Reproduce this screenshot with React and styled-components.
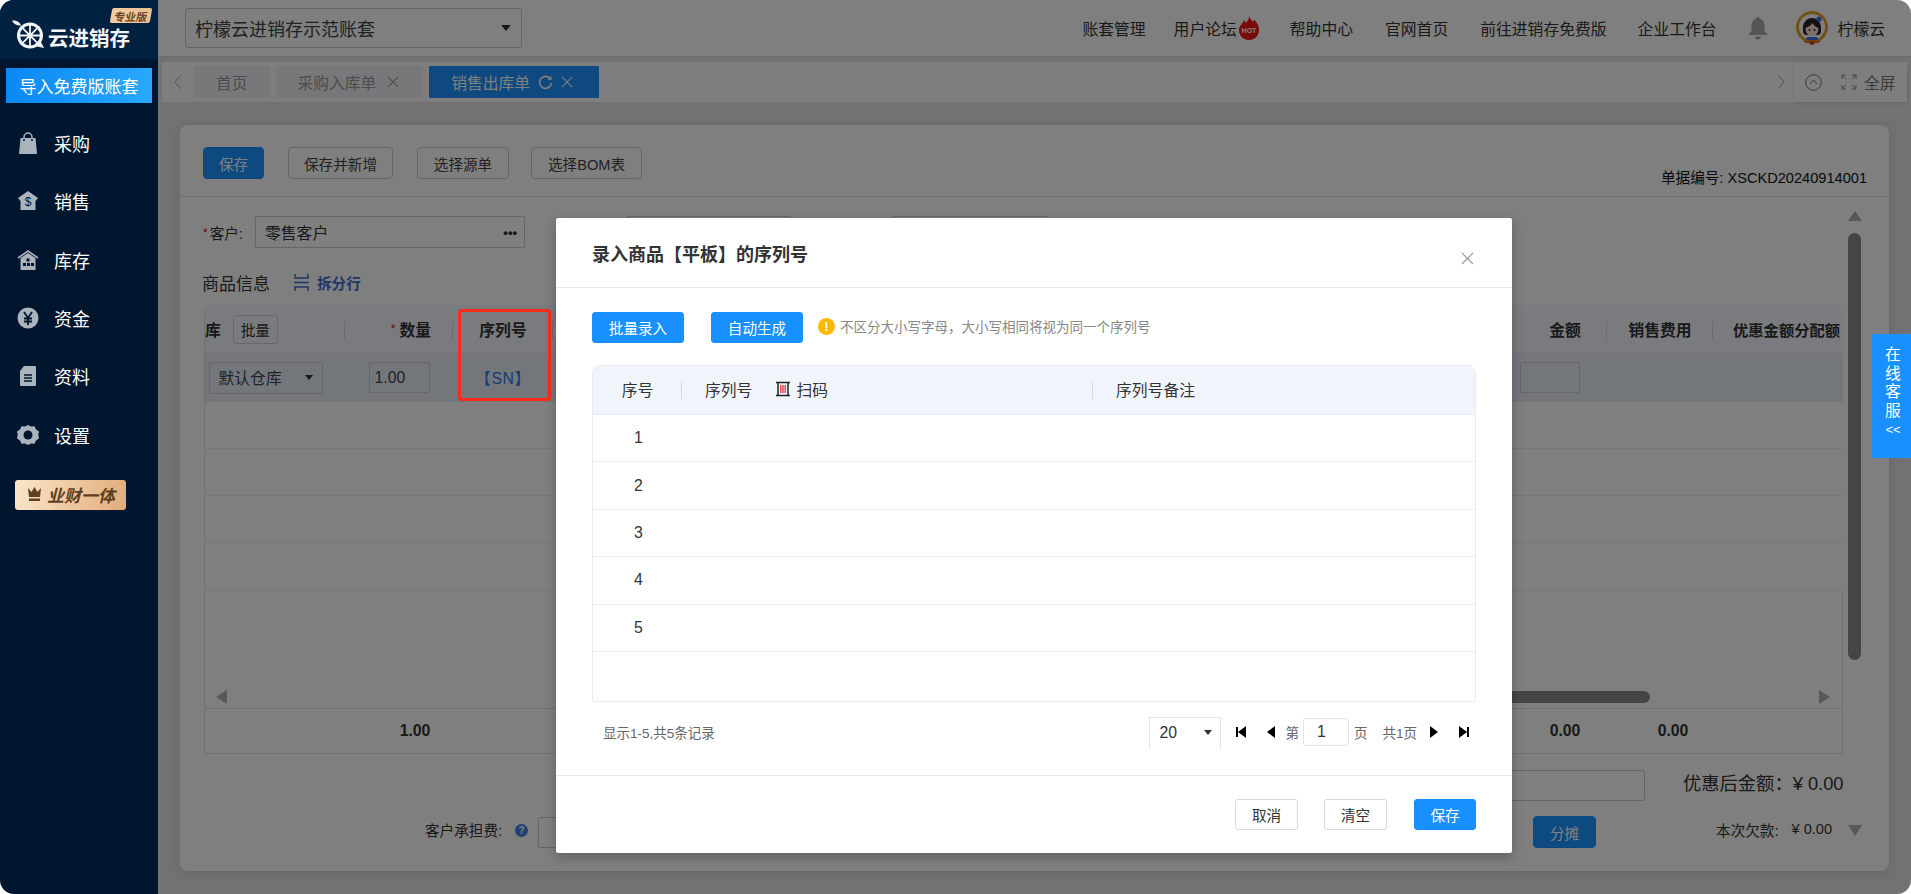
import React from "react";
import styled, { createGlobalStyle } from "styled-components";

const FONT = `"Liberation Sans", "Noto Sans CJK SC", sans-serif`;

const Global = createGlobalStyle`
  html, body { margin: 0; padding: 0; background: #fff; overflow: hidden; }
  body { font-family: ${FONT}; font-size: 14.6px; color: #333; }
  * { box-sizing: border-box; }
`;

const Shell = styled.div`
  position: relative; display: flex; width: 1911px; height: 894px;
  border-radius: 14px; overflow: hidden;
`;

/* ---------- sidebar ---------- */
const Sidebar = styled.aside`
  flex: 0 0 158px; display: flex; flex-direction: column; background: #00162e; color: #fff;
`;
const LogoBar = styled.div`
  position: relative; height: 59px; flex: none; background: #00213f;
  display: flex; align-items: flex-start; padding: 20px 0 0 12px; gap: 3px;
`;
const LogoText = styled.span`
  font-size: 20.5px; font-weight: 700; line-height: 24px; margin-top: 7px; color: #f2f4f7; white-space: nowrap;
`;
const EditionBadge = styled.span`
  position: absolute; left: 111px; top: 8px; width: 40px; height: 15px; border-radius: 2px;
  display: flex; align-items: center; justify-content: center; transform: skewX(-10deg);
  background: linear-gradient(90deg, #f4cda2, #ecc08f); color: #6a4524;
  font-size: 11px; font-weight: 700; white-space: nowrap;
`;
const ImportButton = styled.div`
  margin: 9px 6px 0; height: 35px; flex: none; display: flex; align-items: center; justify-content: center;
  background: linear-gradient(90deg, #0b88f3, #2aa8fd); font-size: 17px; color: #fff;
`;
const Nav = styled.nav`
  margin-top: 11px; display: flex; flex-direction: column;
`;
const NavItem = styled.div`
  height: 58.3px; display: flex; align-items: center; padding-left: 17px; gap: 15px; font-size: 18px; color: #fff;
  svg { flex: none; width: 22px; height: 22px; color: #abb3bd; }
`;
const GoldButton = styled.div`
  margin: 16px 0 0 15px; width: 111px; height: 30px; border-radius: 3px; display: flex; align-items: center;
  padding-left: 12px; gap: 5px; background: linear-gradient(100deg, #fbe5cb, #e2ac79);
  color: #5f3f1d; font-size: 17px; font-weight: 700; font-style: italic; white-space: nowrap;
`;

/* ---------- main ---------- */
const Main = styled.main`
  position: relative; flex: 1; min-width: 0; display: flex; flex-direction: column; background: #e5e5e5;
`;
const Header = styled.header`
  height: 56px; flex: none; display: flex; align-items: center; background: #fff;
  padding: 0 26px 0 27px; box-shadow: 0 1px 3px rgba(0,0,0,.08);
`;
const AccountSelect = styled.div`
  width: 337px; height: 40px; border: 1px solid #ccc; border-radius: 3px; display: flex; align-items: center;
  justify-content: space-between; padding: 0 10px 0 9px; font-size: 18px; color: #444;
`;
const Caret = styled.i`
  display: block; width: 0; height: 0; flex: none;
  border-left: ${p => p.$s || 5}px solid transparent; border-right: ${p => p.$s || 5}px solid transparent;
  border-top: ${p => (p.$s || 5) + 1}px solid ${p => p.$c || "#333"};
`;
const TopNav = styled.div`
  margin-left: auto; display: flex; align-items: center; font-size: 15.8px; color: #333;
`;
const TopLink = styled.span`
  display: flex; align-items: center; gap: ${p => p.$gap ?? 4}px; margin-left: ${p => p.$ml ?? 31}px; white-space: nowrap;
`;
const UserName = styled.span`margin-left: 10px; white-space: nowrap;`;

const TabBar = styled.div`
  height: 40px; flex: none; margin: 6px 4px 0; display: flex; background: #fcfcfc;
`;
const TabArrow = styled.div`
  width: ${p => p.$w}px; flex: none; display: flex; align-items: center; justify-content: center; color: #aaa;
  padding-right: ${p => p.$pr || 0}px;
`;
const Tabs = styled.div`
  flex: 1; display: flex; gap: 6px; padding-top: 4px;
`;
const Tab = styled.div`
  height: 32px; display: flex; align-items: center; padding: 0 ${p => p.$pr ?? 22}px 0 22px; gap: ${p => p.$gap || 0}px;
  background: ${p => p.$active ? "#1c92ff" : "#f0f1f7"}; color: ${p => p.$active ? "#fff" : "#999"};
  font-size: 15.75px; white-space: nowrap; border-radius: 1px;
`;
const TabTools = styled.div`
  width: 113px; flex: none; display: flex; align-items: center; padding-left: 11px; gap: 7px; font-size: 15.8px; color: #777;
  box-shadow: 0 1px 4px rgba(0,0,0,.12);
  svg:first-child { margin-right: 12px; }
`;

const Card = styled.section`
  flex: 1; min-height: 0; margin: 23px 22px 23px 22px; background: #fff; border-radius: 8px; display: flex; flex-direction: column;
  box-shadow: 0 2px 14px rgba(0,0,0,.12);
`;
const CardTop = styled.div`
  height: 72px; flex: none; border-bottom: 1px solid #e4e4e4; display: flex; align-items: flex-start;
  padding: 22px 23px 0 23px; gap: 24px;
`;
const Btn = styled.button`
  height: 32px; width: ${p => p.$w}px; flex: none; padding: 0; border-radius: 4px; font: inherit; font-size: 14.6px; cursor: pointer;
  margin-left: ${p => p.$ml || 0}px;
  border: 1px solid ${p => p.$primary ? "#1890ff" : "#ccc"};
  background: ${p => p.$primary ? "#1a94ff" : "#fff"}; color: ${p => p.$primary ? "#fff" : "#444"};
`;
const DocNo = styled.span`
  margin-left: auto; margin-top: 19px; margin-right: -1px; font-size: 14.6px; color: #111; white-space: nowrap;
`;
const CardBody = styled.div`
  flex: 1; min-height: 0; display: flex; padding: 0 28px 35px 23px; gap: 5px;
`;
const Content = styled.div`
  width: 1640px; flex: none; display: flex; flex-direction: column;
`;
const VScroll = styled.div`
  width: 13px; flex: none; display: flex; flex-direction: column; align-items: center; padding-top: 14px; justify-content: flex-start;
`;
const VThumb = styled.div`
  width: 13px; height: 427px; margin-top: 12px; border-radius: 7px; background: #8a8a8a;
`;
const TriUp = styled.i`
  width: 0; height: 0; border-left: 7px solid transparent; border-right: 7px solid transparent; border-bottom: 10px solid #b0b0b0;
`;
const TriDown = styled.i`
  width: 0; height: 0; margin-top: auto; border-left: 7px solid transparent; border-right: 7px solid transparent; border-top: 11px solid #b0b0b0;
`;

const FormRow = styled.div`
  height: 32px; margin-top: 19px; flex: none; display: flex; align-items: center; font-size: 15.8px; color: #333;
`;
const FieldLabel = styled.span`
  width: 52px; flex: none; white-space: nowrap; font-size: 14.6px;
  b { color: #e00; font-weight: 400; font-size: 12px; margin-right: 2px; vertical-align: 2px; }
`;
const FieldBox = styled.div`
  width: ${p => p.$w}px; margin-left: ${p => p.$ml || 0}px; height: 32px; flex: none; border: 1px solid #ccc; border-radius: 2px;
  display: flex; align-items: center; justify-content: space-between; padding: 0 7px 0 9px; font-size: 15.8px;
`;
const Dots = styled.span`font-weight: 700; font-size: 13px; letter-spacing: 0; line-height: 1;`;
const SectionHead = styled.div`
  height: 24px; margin: 22px 0 0 -1px; flex: none; display: flex; align-items: center; font-size: 17px; color: #333;
`;
const SplitLink = styled.span`
  display: flex; align-items: center; gap: 8px; margin-left: 24px; font-size: 14.6px; font-weight: 700; color: #3f6fd0;
`;
const Table = styled.div`
  margin-top: 11px; margin-left: 1px; width: 1639px; flex: none; display: flex; flex-direction: column; overflow: hidden;
  border-radius: 8px 8px 0 0; border-left: 1px solid #e2e2e2;
`;
const cols = "140px 108px 100px 970px 84px 106px 131px";
const HeadRow = styled.div`
  height: 49px; display: grid; grid-template-columns: ${cols}; background: #f3f7fd; border-bottom: 1px solid #e8ebf1;
`;
const HeadCell = styled.div`
  position: relative; display: flex; align-items: center; justify-content: ${p => p.$left ? "flex-start" : "center"};
  font-size: ${p => p.$fs || 15.8}px; font-weight: 700; color: #333; white-space: nowrap; overflow: hidden;
  padding-left: ${p => p.$pl || 0}px;
  ${p => p.$sep ? `&::after { content: ""; position: absolute; right: 0; top: 16px; height: 18px; width: 1px; background: #d6d9df; }` : ""}
  b { color: #e00; font-size: 12px; margin-right: 4px; font-weight: 400; }
`;
const SmallBtn = styled.span`
  margin-left: 12px; width: 45px; height: 29px; border: 1px solid #d0d3d8; border-radius: 3px; display: flex; align-items: center; justify-content: center;
  font-weight: 400; font-size: 14.6px; color: #333;
`;
const DataRow = styled.div`
  height: 47.5px; display: grid; grid-template-columns: ${cols}; background: #e6eff9; align-items: center;
`;
const RowCell = styled.div`
  display: flex; align-items: center; justify-content: center; font-size: 15.8px; color: #444;
`;
const RowSelect = styled.div`
  width: 114px; height: 32px; margin-left: -19px; border: 1px solid #ccc; border-radius: 2px; display: flex; align-items: center; justify-content: space-between; padding: 0 9px; background: transparent; font-size: 15.8px;
`;
const RowInput = styled.div`
  width: ${p => p.$w}px; height: 31px; margin-left: ${p => p.$ml || 0}px; border: 1px solid #ccc; border-radius: 2px; display: flex; align-items: center; padding-left: 5px; background: ${p => p.$plain ? "transparent" : "#fff"}; font-size: 15.8px;
`;
const SnLink = styled.span`color: #2a7de1; font-size: 15.8px; letter-spacing: .6px;`;
const EmptyRow = styled.div`
  height: 47.3px; border-bottom: 1px solid #ececec;
`;
const ScrollZone = styled.div`
  height: 117px; display: flex; align-items: flex-end; padding: 0 12px 4px 11px; border-right: 1px solid #e2e2e2; position: relative;
`;
const TriLeft = styled.i`
  width: 0; height: 0; border-top: 7px solid transparent; border-bottom: 7px solid transparent; border-right: 11px solid #b0b0b0;
`;
const TriRight = styled.i`
  margin-left: auto; width: 0; height: 0; border-top: 7px solid transparent; border-bottom: 7px solid transparent; border-left: 11px solid #b0b0b0;
`;
const HThumb = styled.div`
  margin-left: 373px; width: 1050px; height: 12px; margin-bottom: 1px; border-radius: 6px; background: #8a8a8a;
`;
const TotalRow = styled.div`
  height: 46px; display: grid; grid-template-columns: ${cols}; align-items: center; border-top: 1px solid #e2e2e2; border-bottom: 1px solid #e2e2e2; border-right: 1px solid #e2e2e2;
  font-size: 15.8px; font-weight: 700; color: #333;
`;
const TotalCell = styled.span`text-align: center; padding-left: ${p => p.$pl || 0}px;`;
const SumRow = styled.div`
  margin-top: ${p => p.$mt}px; height: 31px; flex: none; display: flex; align-items: center; color: #333;
`;
const SumInput = styled.div`
  width: ${p => p.$w}px; height: 31px; flex: none; margin-left: ${p => p.$ml || 0}px; border: 1px solid #ccc; border-radius: 2px;
`;
const SumBig = styled.span`font-size: 18.3px; white-space: nowrap; margin: 0 0 6px ${p => p.$ml}px;`;
const SumSmall = styled.span`font-size: 14.6px; white-space: nowrap; margin: 0 0 6px ${p => p.$ml || 0}px;`;
const HelpDot = styled.span`
  width: 13px; height: 13px; margin: 0 0 3px 13px; flex: none; border-radius: 50%; background: #3f83e8; color: #fff; font-size: 10px; font-weight: 700; display: flex; align-items: center; justify-content: center;
`;

/* ---------- overlay / modal ---------- */
const Mask = styled.div`
  position: absolute; inset: 0; z-index: 5; background: rgba(0,0,0,.5);
`;
const RedMark = styled.div`
  position: absolute; z-index: 6; left: 300px; top: 309px; width: 93px; height: 92px; border: 3px solid #ff2a1a; border-radius: 4px;
`;
const Modal = styled.div`
  position: absolute; z-index: 7; left: 398px; top: 218px; width: 956px; height: 635px; background: #fff; border-radius: 2px;
  display: flex; flex-direction: column; box-shadow: 0 4px 12px rgba(0,0,0,.25);
`;
const ModalHead = styled.div`
  height: 70px; flex: none; display: flex; align-items: center; justify-content: space-between; padding: 0 38px 0 36px; border-bottom: 1px solid #e8e8e8;
  font-size: 18px; font-weight: 700; color: #333;
`;
const CloseX = styled.span`display: flex; color: #999; margin-top: 12px;`;
const ModalBody = styled.div`
  flex: 1; padding: 23px 36px 0; display: flex; flex-direction: column;
`;
const ModalTools = styled.div`
  height: 32px; flex: none; display: flex; align-items: center;
`;
const ActionBtn = styled.button`
  width: ${p => p.$w}px; height: 31px; flex: none; margin-left: ${p => p.$ml || 0}px; padding: 0; border-radius: 3px; font: inherit; font-size: 14.6px; cursor: pointer;
  border: 1px solid ${p => p.$primary ? "#1890ff" : "#d9d9d9"}; background: ${p => p.$primary ? "#1890ff" : "#fff"}; color: ${p => p.$primary ? "#fff" : "#333"};
`;
const Warn = styled.span`
  margin: 0 0 2px 15px; width: 17px; height: 17px; flex: none; border-radius: 50%; background: #ffb800; color: #fff; font-size: 13px; font-weight: 700; display: flex; align-items: center; justify-content: center;
`;
const WarnText = styled.span`
  margin: 0 0 2px 5px; font-size: 13.5px; color: #888; white-space: nowrap;
`;
const SnTable = styled.div`
  margin-top: 22px; height: 337px; flex: none; border: 1px solid #e8eaf0; border-radius: 8px 8px 0 0; overflow: hidden; display: flex; flex-direction: column;
`;
const snCols = "89px 411px 1fr";
const SnHead = styled.div`
  height: 49px; flex: none; display: grid; grid-template-columns: ${snCols}; background: #f0f4fb; border-bottom: 1px solid #e8ebf1; font-size: 15.8px; color: #333; padding-bottom: 2px;
`;
const SnHeadCell = styled.div`
  position: relative; display: flex; align-items: center; justify-content: ${p => p.$center ? "center" : "flex-start"};
  padding-left: ${p => p.$center ? 0 : 23}px; gap: 4px;
  ${p => p.$sep ? `&::after { content: ""; position: absolute; right: 0; top: 15px; height: 18px; width: 1px; background: #d6d9df; }` : ""}
`;
const ScanLabel = styled.span`
  display: flex; align-items: center; gap: 5px; margin-left: 19px;
`;
const SnRow = styled.div`
  height: 47.4px; flex: none; display: grid; grid-template-columns: ${snCols}; align-items: center; border-bottom: 1px solid #eceef4; font-size: 15.8px; color: #333;
`;
const SnIndex = styled.span`text-align: center; margin-left: 2px;`;
const Pager = styled.div`
  margin-top: 14px; height: 32px; flex: none; display: flex; align-items: center; padding: 0 6px 0 11px; color: #666; font-size: 13.5px;
`;
const PageSize = styled.div`
  margin-left: auto; width: 72px; height: 31px; border: 1px solid #e2e2e8; border-bottom: none; display: flex; align-items: center; justify-content: space-between;
  padding: 0 8px 0 9px; font-size: 15.8px; color: #333;
`;
const PageIcon = styled.svg`
  width: 12px; height: 12px; flex: none; margin-left: ${p => p.$ml}px; color: #000;
`;
const PageText = styled.span`
  margin-left: ${p => p.$ml}px; font-size: 13.5px; color: #666; white-space: nowrap;
`;
const PageInput = styled.div`
  margin-left: 4px; width: 46px; height: 28px; border: 1px solid #e2e2e8; border-radius: 3px; display: flex; align-items: center; padding-left: 13px; font-size: 15.8px; color: #333;
`;
const ModalFoot = styled.div`
  height: 78px; flex: none; border-top: 1px solid #e8e8e8; display: flex; align-items: flex-start; justify-content: flex-end; padding: 23px 36px 0;
`;
const OnlineTab = styled.div`
  position: absolute; z-index: 8; right: 0; top: 334px; width: 39px; height: 124px; background: #1a90ff; color: #fff; font-size: 15.8px; line-height: 18.7px;
  display: flex; flex-direction: column; align-items: center; padding: 12px 0 0 3px;
  small { font-size: 13px; line-height: 17px; }
`;

/* ---------- drawings ---------- */
const LemonLogo = () => (
  <svg width="33" height="29" viewBox="0 0 33 29" style={{ flex: "none" }}>
    <path d="M0 .5c4-.5 8 1.500 9 5-3.500.5-7.500-1-9-5z" fill="#f2f4f7" />
    <circle cx="18" cy="15.500" r="13" fill="#f2f4f7" />
    <path d="M29 22l3 6-7-1.500z" fill="#f2f4f7" />
    <circle cx="18" cy="15.500" r="10" fill="#00213f" />
    <g stroke="#f2f4f7" strokeWidth="1.800">
      <path d="M18 5v21M7.500 15.500h21M10.600 8.100l14.800 14.800M25.400 8.100 10.600 22.900" />
    </g>
    <circle cx="18" cy="15.500" r="2" fill="#f2f4f7" />
  </svg>
);
const Ico = {
  bag: <svg viewBox="0 0 22 22"><path d="M7 8V5a4 4 0 0 1 8 0v3" fill="none" stroke="currentColor" strokeWidth="1.500" /><path d="M3.500 6h15L20 22H2z" fill="currentColor" /><circle cx="7" cy="8" r="1" fill="#00162e" /><circle cx="15" cy="8" r="1" fill="#00162e" /></svg>,
  tag: <svg viewBox="0 0 22 22"><path d="M11 1l10 7-2.500 3v9h-15v-9L1 8z" fill="currentColor" /><text x="11" y="16" fontSize="12" textAnchor="middle" fill="#00162e" fontFamily="Liberation Sans">$</text></svg>,
  house: <svg viewBox="0 0 22 22"><path d="M1 9l10-7 10 7" fill="none" stroke="currentColor" strokeWidth="1.600" /><path d="M3.500 9L11 4l7.500 5v12h-15z" fill="currentColor" /><g fill="#00162e"><rect x="9.500" y="9.500" width="3" height="3" /><rect x="6" y="14" width="3" height="3" /><rect x="10" y="14" width="3" height="3" /><rect x="14" y="14" width="3" height="3" /></g></svg>,
  yen: <svg viewBox="0 0 22 22"><circle cx="11" cy="11" r="10.500" fill="currentColor" /><path d="M7 5l4 6 4-6M7 11.500h8M7 14.500h8M11 11v7" fill="none" stroke="#00162e" strokeWidth="1.800" /></svg>,
  doc: <svg viewBox="0 0 22 22"><path d="M7 1h11a1 1 0 0 1 1 1v18a1 1 0 0 1-1 1H4a1 1 0 0 1-1-1V6z" fill="currentColor" /><path d="M7 10h8M7 13h8M7 16h8" stroke="#00162e" strokeWidth="1.300" /></svg>,
  gear: <svg viewBox="0 0 22 22"><path d="M11 1l3 1.600 3.500-.3 1.500 3.200 3 2-.8 3.500.8 3.500-3 2-1.500 3.200-3.500-.3L11 21l-3-1.600-3.500.3L3 16.500l-3-2 .8-3.500L0 7.500l3-2 1.500-3.200 3.500.3z" fill="currentColor" /><circle cx="11" cy="11" r="4.500" fill="#00162e" /></svg>,
};
const Crown = () => (
  <svg width="15" height="15" viewBox="0 0 15 15" style={{ flex: "none" }}><path d="M1 1l3.500 4L7.500 0l3 5L14 1l-1 9H2z" fill="#5f3f1d" /><rect x="2" y="11.500" width="11" height="2.500" fill="#5f3f1d" /></svg>
);
const Flame = () => (
  <svg width="20" height="24" viewBox="0 0 20 24" style={{ flex: "none" }}>
    <path d="M10 0c1 3 3 4 4 6 .5-1 1-1.500 1-2.500C18 6 20 10 20 14c0 6-4.500 10-10 10S0 20 0 14C0 9 4 8 5 4c1 1 1.500 2 1.500 3C9 5 10 3 10 0z" fill="#f01515" />
    <text x="10" y="17" fontSize="7" fontWeight="700" fill="#fff" textAnchor="middle" fontFamily="Liberation Sans">HOT</text>
  </svg>
);
const Bell = () => (
  <svg width="20" height="24" viewBox="0 0 20 24" style={{ flex: "none" }}>
    <path d="M10 1c1 0 1.500.6 1.500 1.500C15 3.500 16.500 6.500 16.500 10v5l3 3v1H.500v-1l3-3v-5c0-3.500 1.500-6.500 5-7.500C8.500 1.600 9 1 10 1z" fill="#aaa" />
    <path d="M7 20.500h6a3 3 0 0 1-6 0z" fill="#aaa" />
  </svg>
);
const Avatar = () => (
  <svg width="32" height="34" viewBox="0 0 32 34" style={{ flex: "none" }}>
    <circle cx="16" cy="16" r="14.500" fill="#fff" stroke="#e4a32a" strokeWidth="3" />
    <path d="M7 30c3 3.500 15 3.500 18 0l-9-2z" fill="#e07a20" />
    <circle cx="16" cy="32" r="2" fill="#d92c1c" />
    <path d="M7 20c-1-9 4-13 9-13s10 4 9 13c0 3-2 4-3 4H10c-1 0-3-1-3-4z" fill="#2b2028" />
    <ellipse cx="16" cy="18" rx="6.500" ry="7" fill="#fde0cf" />
    <path d="M9.500 17c0-5 3-8 6.500-8s6.500 3 6.500 8c-3-1-5-3-6-5-1 2-4 4-7 5z" fill="#2b2028" />
    <circle cx="13.500" cy="19" r="1" fill="#222" /><circle cx="18.500" cy="19" r="1" fill="#222" />
    <circle cx="23" cy="8" r="2.600" fill="#3c6ee0" />
    <path d="M11 26h10l1 3H10z" fill="#3c6ee0" />
  </svg>
);
const Chevron = ({ dir }) => (
  <svg width="10" height="18" viewBox="0 0 10 18"><path d={dir === "l" ? "M8 2 2 9l6 7" : "M2 2l6 7-6 7"} fill="none" stroke="currentColor" strokeWidth="1" /></svg>
);
const XIcon = ({ s = 13, c = "currentColor" }) => (
  <svg width={s} height={s} viewBox="0 0 13 13" style={{ flex: "none" }}><path d="M1 1l11 11M12 1 1 12" stroke={c} strokeWidth="1.100" /></svg>
);
const Refresh = () => (
  <svg width="15" height="15" viewBox="0 0 15 15" style={{ flex: "none" }}><path d="M12.500 4A6 6 0 1 0 13.500 8" fill="none" stroke="#fff" strokeWidth="1.600" /><path d="M13.500 1v4h-4z" fill="#fff" /></svg>
);
const CircleUp = () => (
  <svg width="17" height="17" viewBox="0 0 17 17" style={{ flex: "none" }}><circle cx="8.500" cy="8.500" r="7.800" fill="none" stroke="#777" /><path d="M5 10l3.500-4L12 10" fill="none" stroke="#777" /></svg>
);
const FullIcon = () => (
  <svg width="16" height="16" viewBox="0 0 16 16" style={{ flex: "none" }}><path d="M1 5V1h4M11 1h4v4M15 11v4h-4M5 15H1v-4M1 1l4 4M15 1l-4 4M15 15l-4-4M1 15l4-4" fill="none" stroke="#888" /></svg>
);
const SplitIcon = () => (
  <svg width="15" height="17" viewBox="0 0 15 17" style={{ flex: "none" }}><path d="M1 0v4h13V0M0 8.500h15M1 17v-4h13v4" fill="none" stroke="#3f6fd0" strokeWidth="1.500" /></svg>
);
const ScanIcon = () => (
  <svg width="16" height="16" viewBox="0 0 16 16" style={{ flex: "none" }}><path d="M1 1.500h14M1 14.500h14M3 1.500v13M13 1.500v13" stroke="#222" strokeWidth="1.500" fill="none" /><path d="M5.800 4v8M8 4v8M10.200 4v8" stroke="#e8394a" strokeWidth="1.400" /></svg>
);
const First = <><path d="M1 1h2v10H1z" fill="currentColor" /><path d="M11 0v12L3 6z" fill="currentColor" /></>;
const Prev = <path d="M10 0v12L2 6z" fill="currentColor" />;
const Next = <path d="M2 0v12l8-6z" fill="currentColor" />;
const Last = <><path d="M9 1h2v10H9z" fill="currentColor" /><path d="M1 0v12l8-6z" fill="currentColor" /></>;

const navItems = [["bag", "采购"], ["tag", "销售"], ["house", "库存"], ["yen", "资金"], ["doc", "资料"], ["gear", "设置"]];

export default function App() {
  return (
    <Shell>
      <Global />
      <Sidebar>
        <LogoBar>
          <LemonLogo />
          <LogoText>云进销存</LogoText>
          <EditionBadge>专业版</EditionBadge>
        </LogoBar>
        <ImportButton>导入免费版账套</ImportButton>
        <Nav>
          {navItems.map(([k, t]) => (
            <NavItem key={t}>{Ico[k]}{t}</NavItem>
          ))}
        </Nav>
        <GoldButton><Crown />业财一体</GoldButton>
      </Sidebar>

      <Main>
        <Header>
          <AccountSelect>柠檬云进销存示范账套<Caret /></AccountSelect>
          <TopNav>
            <TopLink $ml={0}>账套管理</TopLink>
            <TopLink $ml={28} $gap={2}>用户论坛<Flame /></TopLink>
            <TopLink>帮助中心</TopLink>
            <TopLink $ml={32}>官网首页</TopLink>
            <TopLink $ml={32}>前往进销存免费版</TopLink>
            <TopLink>企业工作台</TopLink>
            <TopLink><Bell /></TopLink>
            <TopLink $ml={28}><Avatar /></TopLink>
            <UserName>柠檬云</UserName>
          </TopNav>
        </Header>

        <TabBar>
          <TabArrow $w={32}><Chevron dir="l" /></TabArrow>
          <Tabs>
            <Tab>首页</Tab>
            <Tab $pr={24} $gap={11}>采购入库单<XIcon s={12} c="#999" /></Tab>
            <Tab $active $pr={26} $gap={8}>销售出库单<Refresh /><XIcon s={12} c="#fff" /></Tab>
          </Tabs>
          <TabArrow $w={18} $pr={8}><Chevron dir="r" /></TabArrow>
          <TabTools><CircleUp /><FullIcon />全屏</TabTools>
        </TabBar>

        <Card>
          <CardTop>
            <Btn $primary $w={61}>保存</Btn>
            <Btn $w={105}>保存并新增</Btn>
            <Btn $w={92}>选择源单</Btn>
            <Btn $w={111} $ml={-2}>选择BOM表</Btn>
            <DocNo>单据编号: XSCKD20240914001</DocNo>
          </CardTop>
          <CardBody>
            <Content>
              <FormRow>
                <FieldLabel><b>*</b>客户:</FieldLabel>
                <FieldBox $w={270}>零售客户<Dots>•••</Dots></FieldBox>
                <FieldBox $w={165} $ml={101} />
                <FieldBox $w={158} $ml={100} />
              </FormRow>
              <SectionHead>
                商品信息
                <SplitLink><SplitIcon />拆分行</SplitLink>
              </SectionHead>
              <Table>
                <HeadRow>
                  <HeadCell $left $sep>库<SmallBtn>批量</SmallBtn></HeadCell>
                  <HeadCell $sep $pl={24}><b>*</b>数量</HeadCell>
                  <HeadCell $sep>序列号</HeadCell>
                  <HeadCell />
                  <HeadCell $sep>金额</HeadCell>
                  <HeadCell $sep>销售费用</HeadCell>
                  <HeadCell $left $pl={20} $fs={15.3}>优惠金额分配额</HeadCell>
                </HeadRow>
                <DataRow>
                  <RowCell><RowSelect>默认仓库<Caret $s={4} /></RowSelect></RowCell>
                  <RowCell><RowInput $w={61} $plain>1.00</RowInput></RowCell>
                  <RowCell><SnLink>【SN】</SnLink></RowCell>
                  <RowCell />
                  <RowCell><RowInput $w={60} $ml={-30} $plain /></RowCell>
                  <RowCell />
                  <RowCell />
                </DataRow>
                <EmptyRow /><EmptyRow /><EmptyRow /><EmptyRow />
                <ScrollZone>
                  <TriLeft />
                  <HThumb />
                  <TriRight />
                </ScrollZone>
                <TotalRow>
                  <span />
                  <TotalCell $pl={32}>1.00</TotalCell>
                  <span /><span />
                  <TotalCell>0.00</TotalCell>
                  <TotalCell $pl={26}>0.00</TotalCell>
                  <span />
                </TotalRow>
              </Table>
              <SumRow $mt={16}>
                <SumInput $w={500} $ml={942} />
                <SumBig $ml={38}>优惠后金额：¥ 0.00</SumBig>
              </SumRow>
              <SumRow $mt={16}>
                <SumSmall $ml={222}>客户承担费:</SumSmall>
                <HelpDot>?</HelpDot>
                <SumInput $w={200} $ml={10} />
                <Btn $primary $w={63} $ml={795}>分摊</Btn>
                <SumSmall $ml={120}>本次欠款:</SumSmall>
                <SumSmall $ml={13}>¥ 0.00</SumSmall>
              </SumRow>
            </Content>
            <VScroll>
              <TriUp />
              <VThumb />
              <TriDown />
            </VScroll>
          </CardBody>
        </Card>

        <Mask />
        <RedMark />

        <Modal>
          <ModalHead>
            录入商品【平板】的序列号
            <CloseX><XIcon /></CloseX>
          </ModalHead>
          <ModalBody>
            <ModalTools>
              <ActionBtn $primary $w={92}>批量录入</ActionBtn>
              <ActionBtn $primary $w={92} $ml={27}>自动生成</ActionBtn>
              <Warn>!</Warn>
              <WarnText>不区分大小写字母，大小写相同将视为同一个序列号</WarnText>
            </ModalTools>
            <SnTable>
              <SnHead>
                <SnHeadCell $center $sep>序号</SnHeadCell>
                <SnHeadCell $sep>序列号<ScanLabel><ScanIcon />扫码</ScanLabel></SnHeadCell>
                <SnHeadCell>序列号备注</SnHeadCell>
              </SnHead>
              {[1, 2, 3, 4, 5].map(n => (
                <SnRow key={n}><SnIndex>{n}</SnIndex><span /><span /></SnRow>
              ))}
            </SnTable>
            <Pager>
              显示1-5,共5条记录
              <PageSize>20<Caret $s={4} /></PageSize>
              <PageIcon $ml={14} viewBox="0 0 12 12">{First}</PageIcon>
              <PageIcon $ml={18} viewBox="0 0 12 12">{Prev}</PageIcon>
              <PageText $ml={8}>第</PageText>
              <PageInput>1</PageInput>
              <PageText $ml={5}>页</PageText>
              <PageText $ml={15}>共1页</PageText>
              <PageIcon $ml={11} viewBox="0 0 12 12">{Next}</PageIcon>
              <PageIcon $ml={18} viewBox="0 0 12 12">{Last}</PageIcon>
            </Pager>
          </ModalBody>
          <ModalFoot>
            <ActionBtn $w={63}>取消</ActionBtn>
            <ActionBtn $w={63} $ml={26}>清空</ActionBtn>
            <ActionBtn $primary $w={62} $ml={27}>保存</ActionBtn>
          </ModalFoot>
        </Modal>

        <OnlineTab>在<span>线</span><span>客</span><span>服</span><small>&lt;&lt;</small></OnlineTab>
      </Main>
    </Shell>
  );
}
